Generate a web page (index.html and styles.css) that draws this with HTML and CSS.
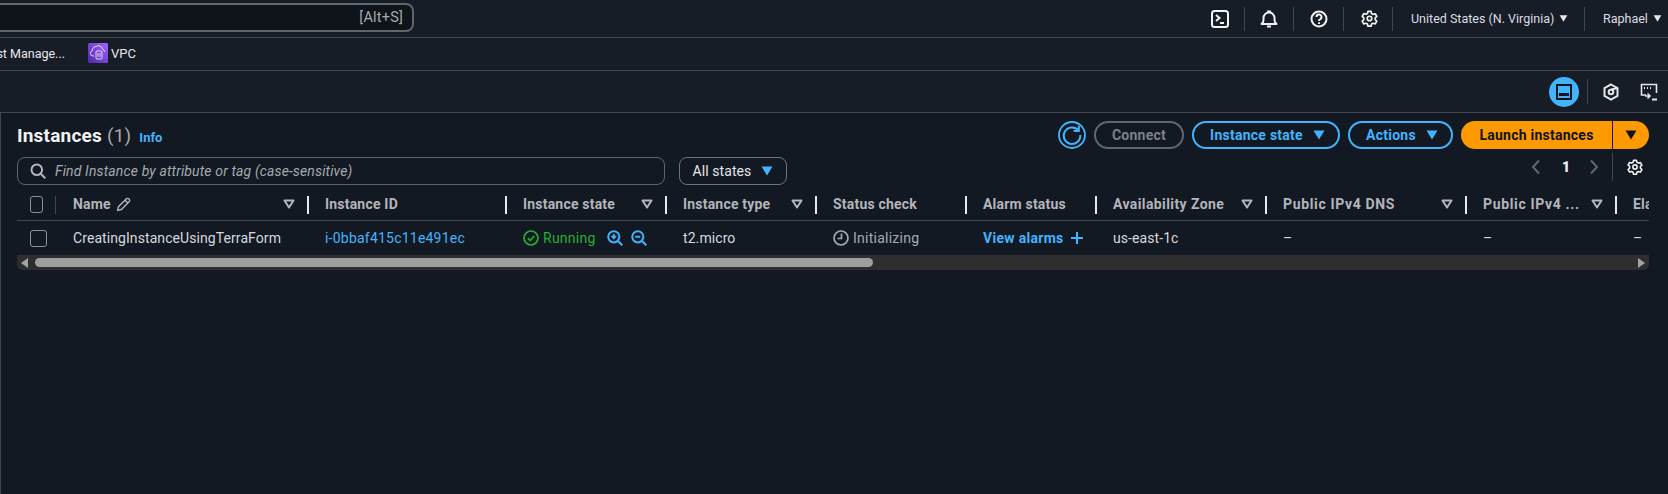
FILE: index.html
```html
<!DOCTYPE html>
<html lang="en">
<head>
<meta charset="utf-8">
<title>Instances</title>
<link rel="stylesheet" href="styles.css">
</head>
<body>
<svg class="defs" width="0" height="0" aria-hidden="true">
  <symbol id="gear" viewBox="0 0 24 24"><circle cx="12" cy="12" r="3.2" fill="none" stroke="currentColor" stroke-width="2.4"/><path fill="none" stroke="currentColor" stroke-width="2.4" stroke-linejoin="round" d="M9.8 2h4.4l.7 3 2.2 1.2 3-.9 2.2 3.8-2.2 2.1v2.5l2.2 2.1-2.2 3.8-3-.9-2.2 1.2-.7 3H9.8l-.7-3-2.2-1.2-3 .9-2.2-3.8 2.2-2.1V11L1.700 8.900l2.200-3.800 3 .9L9.100 5z"/></symbol>
  <symbol id="sort" viewBox="0 0 12 10"><path d="M1.500 1.500h9L6 8.500z" fill="none" stroke="currentColor" stroke-width="2" stroke-linejoin="round"/></symbol>
  <symbol id="caret" viewBox="0 0 12 10"><path d="M0.500 0.500h11L6 9.500z" fill="currentColor"/></symbol>
</svg>

<header class="topbar">
  <div class="global-search"><span class="shortcut">[Alt+S]</span></div>
  <div class="top-actions">
    <span class="top-icon"><svg width="18" height="18" viewBox="0 0 18 18" fill="none" stroke="currentColor" stroke-width="2"><rect x="1" y="1" width="16" height="16" rx="2.500"/><path d="M5 5l3.500 3L5 11M9 13h4"/></svg></span>
    <span class="top-icon"><svg width="18" height="18" viewBox="0 0 18 18" fill="none" stroke="currentColor" stroke-width="2" stroke-linejoin="round"><path d="M1.500 14h15c-1.500-1.200-2-2-2-4V8A5.500 5.500 0 0 0 3.500 8v2c0 2-.5 2.800-2 4z"/><path d="M7 1.500h4M7 16.500h4"/></svg></span>
    <span class="top-icon"><svg width="18" height="18" viewBox="0 0 18 18" fill="none" stroke="currentColor" stroke-width="2"><circle cx="9" cy="9" r="7.500"/><path d="M6.500 7a2.500 2.500 0 1 1 3.500 2.300c-.7.300-1 .8-1 1.700M9 12.200v1.800"/></svg></span>
    <span class="top-icon"><svg class="gear-top" width="17" height="17"><use href="#gear"/></svg></span>
    <span class="top-menu region">United States (N. Virginia)<svg class="menu-caret" width="9" height="7"><use href="#caret"/></svg></span>
    <span class="top-menu user">Raphael<svg class="menu-caret" width="9" height="7"><use href="#caret"/></svg></span>
  </div>
</header>

<nav class="favorites">
  <span class="fav-clipped">Trust Manage...</span>
  <span class="fav-vpc">
    <svg width="20" height="20" viewBox="0 0 20 20"><defs><linearGradient id="vpcg" x1="0" y1="1" x2="1" y2="0"><stop offset="0" stop-color="#4d27a8"/><stop offset="1" stop-color="#a166ff"/></linearGradient></defs><rect width="20" height="20" rx="1.500" fill="url(#vpcg)"/><path d="M6 13H5a2.700 2.700 0 0 1-.6-5.300A3.500 3.500 0 0 1 8 3.600a4 4 0 0 1 6.500 2.400 3 3 0 0 1 2 3" fill="none" stroke="#fff" stroke-width=".8"/><rect x="8" y="8" width="6" height="8" rx="1" fill="none" stroke="#fff" stroke-width=".8"/><path d="M10 10v4M12 10v4" stroke="#fff" stroke-width=".8"/></svg>
    VPC
  </span>
</nav>

<div class="toolbar">
  <span class="panel-toggle"><svg width="16" height="16" viewBox="0 0 16 16" fill="none" stroke="#10151c" stroke-width="2"><rect x="1" y="1" width="14" height="14"/><path d="M3 10.500h10" stroke-width="3"/></svg></span>
  <span class="tool-icon first"><svg width="16" height="18" viewBox="0 0 16 18" fill="none" stroke="currentColor" stroke-width="2"><path d="M8 1.500l6.500 3.700v7.600L8 16.500l-6.500-3.700V5.200z"/><circle cx="8" cy="9" r="2.300"/><path d="M8 6.500l6-1.300"/></svg></span>
  <span class="tool-icon last"><svg width="18" height="18" viewBox="0 0 18 18" fill="none" stroke="currentColor" stroke-width="1.600"><path d="M6 12H1.500V1.500h15V10"/><path d="M4 5h1M7 5h1M10 5h1" stroke-width="2"/><path d="M5 10h5M7.500 7.500L10 10l-2.500 2.500" transform="translate(0 3)"/><path d="M12 16.500h5" stroke-width="2"/></svg></span>
</div>

<main class="panel">
  <div class="panel-head">
    <h1 class="title">Instances <span class="count">(1)</span> <a class="info">Info</a></h1>
    <div class="actions">
      <span class="refresh"><svg width="28" height="28" viewBox="0 0 28 28" fill="none" stroke="currentColor"><circle cx="14" cy="14" r="13" stroke-width="1.800"/><path d="M20.500 9.500A8.300 8.300 0 1 0 22.300 14" stroke-width="2"/><path d="M20.800 4.800v5.200h-5.200" stroke-width="2"/></svg></span>
      <span class="btn disabled">Connect</span>
      <span class="btn outline state-btn">Instance state<svg width="12" height="10"><use href="#caret"/></svg></span>
      <span class="btn outline actions-btn">Actions<svg width="12" height="10"><use href="#caret"/></svg></span>
      <span class="launch"><span class="launch-main">Launch instances</span><span class="launch-more"><svg width="12" height="10"><use href="#caret"/></svg></span></span>
    </div>
  </div>

  <div class="filter-row">
    <div class="find">
      <svg width="16" height="16" viewBox="0 0 16 16" fill="none" stroke="currentColor" stroke-width="2"><circle cx="6.800" cy="6.800" r="5.300"/><path d="M10.800 10.800l4.500 4.500"/></svg>
      <em>Find Instance by attribute or tag (case-sensitive)</em>
    </div>
    <span class="all-states">All states<svg width="12" height="10"><use href="#caret"/></svg></span>
    <div class="pager">
      <svg class="pg-arrow" width="10" height="16" viewBox="0 0 10 16" fill="none" stroke="currentColor" stroke-width="2"><path d="M8 1.500L2 8l6 6.500"/></svg>
      <b>1</b>
      <svg class="pg-arrow" width="10" height="16" viewBox="0 0 10 16" fill="none" stroke="currentColor" stroke-width="2"><path d="M2 1.500L8 8l-6 6.500"/></svg>
      <span class="pg-gear"><svg width="16" height="16"><use href="#gear"/></svg></span>
    </div>
  </div>

  <div class="table">
    <div class="grid head">
      <div class="cell check-cell"><i class="check"></i></div>
      <div class="cell"><span class="name-label">Name<svg width="15" height="15" viewBox="0 0 14 14" fill="none" stroke="currentColor" stroke-width="1.300"><path d="M1.500 12.500l.8-3.500L9.500 1.800a1.600 1.600 0 0 1 2.700 2.700L5 11.700z"/><path d="M8.500 3l2.500 2.500"/></svg></span><svg class="sort" width="12" height="10"><use href="#sort"/></svg></div>
      <div class="cell">Instance ID</div>
      <div class="cell">Instance state<svg class="sort" width="12" height="10"><use href="#sort"/></svg></div>
      <div class="cell">Instance type<svg class="sort" width="12" height="10"><use href="#sort"/></svg></div>
      <div class="cell">Status check</div>
      <div class="cell">Alarm status</div>
      <div class="cell wide">Availability Zone<svg class="sort" width="12" height="10"><use href="#sort"/></svg></div>
      <div class="cell wider">Public IPv4 DNS<svg class="sort" width="12" height="10"><use href="#sort"/></svg></div>
      <div class="cell wider">Public IPv4 ...<svg class="sort" width="12" height="10"><use href="#sort"/></svg></div>
      <div class="cell last">Elastic IP</div>
    </div>
    <div class="grid row">
      <div class="cell check-cell"><i class="check"></i></div>
      <div class="cell">CreatingInstanceUsingTerraForm</div>
      <div class="cell"><a class="link">i-0bbaf415c11e491ec</a></div>
      <div class="cell">
        <span class="running"><svg width="16" height="16" viewBox="0 0 16 16" fill="none" stroke="currentColor" stroke-width="1.700"><circle cx="8" cy="8" r="7"/><path d="M4.800 8.200l2.300 2.300 4.200-4.500"/></svg>Running</span>
        <svg class="zoom first-zoom" width="16" height="16" viewBox="0 0 16 16" fill="none" stroke="currentColor" stroke-width="2"><circle cx="6.800" cy="6.800" r="5.600"/><path d="M11 11l4.300 4.300M4.300 6.800h5M6.800 4.300v5"/></svg>
        <svg class="zoom" width="16" height="16" viewBox="0 0 16 16" fill="none" stroke="currentColor" stroke-width="2"><circle cx="6.800" cy="6.800" r="5.600"/><path d="M11 11l4.300 4.300M4.300 6.800h5"/></svg>
      </div>
      <div class="cell">t2.micro</div>
      <div class="cell"><span class="init"><svg width="16" height="16" viewBox="0 0 16 16" fill="none" stroke="currentColor" stroke-width="1.700"><circle cx="8" cy="8" r="7"/><path d="M8.500 3.500V8.500H4.500"/></svg>Initializing</span></div>
      <div class="cell"><a class="alarms">View alarms</a><svg class="plus" width="14" height="14" viewBox="0 0 14 14" stroke="currentColor" stroke-width="2"><path d="M7 1v12M1 7h12"/></svg></div>
      <div class="cell">us-east-1c</div>
      <div class="cell">–</div>
      <div class="cell">–</div>
      <div class="cell last">–</div>
    </div>
    <div class="hscroll">
      <i class="arrow-l"></i>
      <span class="thumb"></span>
      <i class="arrow-r"></i>
    </div>
  </div>
</main>
</body>
</html>
```
FILE: styles.css
```css
* { box-sizing: border-box; }
html, body { margin: 0; height: 100%; }
body {
  width: 1668px;
  height: 494px;
  overflow: hidden;
  background: #161d26;
  color: #e3e3e8;
  font-family: Roboto, "Liberation Sans", sans-serif;
  font-size: 14px;
  letter-spacing: .08px;
}
svg { display: block; flex: none; }
.defs { position: absolute; }

.topbar {
  height: 38px;
  display: flex;
  justify-content: space-between;
  border-bottom: 1px solid #424650;
}
.global-search {
  width: 414px;
  height: 29px;
  margin-top: 3px;
  background: #0f141a;
  border: 2px solid #5f6670;
  border-left: 0;
  border-radius: 0 8px 8px 0;
  display: flex;
  align-items: center;
  justify-content: flex-end;
  padding: 0 9px 1px 0;
  color: #a6a9b0;
  font-size: 14.500px;
  letter-spacing: .2px;
}
.top-actions { display: flex; align-items: center; color: #f2f2f5; }
.top-icon {
  width: 49.33px;
  height: 24px;
  display: flex;
  align-items: center;
  justify-content: center;
  border-right: 1px solid #424650;
}
.gear-top { margin-left: 3px; }
.top-menu {
  height: 24px;
  display: flex;
  align-items: center;
  font-size: 12.500px;
  letter-spacing: 0;
  color: #dcdce2;
  white-space: nowrap;
}
.region { width: 192px; padding-left: 18px; border-right: 1px solid #424650; }
.user { width: 83px; padding-left: 18px; }
.menu-caret { margin-left: 5px; color: #e6e6ea; }

.favorites {
  height: 33px;
  display: flex;
  align-items: center;
  padding-bottom: 2px;
  border-bottom: 1px solid #424650;
  color: #e8e8ec;
  font-size: 13px;
}
.fav-clipped {
  width: 65px;
  display: flex;
  justify-content: flex-end;
  overflow: hidden;
  white-space: nowrap;
  margin-right: 23px;
  font-size: 12.500px;
  letter-spacing: 0;
}
.fav-vpc { display: flex; align-items: center; gap: 3px; letter-spacing: 0; }

.toolbar {
  height: 42px;
  display: flex;
  align-items: center;
  justify-content: flex-end;
  border-bottom: 1px solid #424650;
  color: #e6e6ea;
}
.panel-toggle {
  width: 30px;
  height: 30px;
  border-radius: 50%;
  background: #42b4ff;
  display: flex;
  align-items: center;
  justify-content: center;
  margin-right: 8px;
}
.tool-icon { display: flex; align-items: center; justify-content: center; height: 25px; }
.tool-icon.first { width: 47px; border-left: 1px solid #424650; }
.tool-icon.last { width: 34px; padding-right: 5px; }

.panel {
  height: 381px;
  background: #121922;
  border-left: 1px solid #424650;
  padding: 8px 19px 0 16px;
}
.panel-head { display: flex; justify-content: space-between; align-items: center; height: 28px; }
.title { margin: 0; font-size: 19px; font-weight: 700; letter-spacing: .2px; color: #f2f2f5; display: flex; align-items: baseline; gap: 5px; }
.count { font-weight: 400; color: #a6a9b0; }
.info { font-size: 13px; font-weight: 700; color: #42b4ff; margin-left: 3px; letter-spacing: 0; }
.actions { display: flex; align-items: center; gap: 8px; font-weight: 700; letter-spacing: .25px; }
.refresh { color: #42b4ff; }
.btn {
  height: 28px;
  border-radius: 14px;
  border: 2px solid;
  display: flex;
  align-items: center;
  justify-content: center;
  gap: 10px;
}
.disabled { width: 90px; color: #7d8189; border-color: #5f6670; }
.outline { color: #42b4ff; border-color: #42b4ff; padding-left: 3px; }
.state-btn { width: 148px; }
.actions-btn { width: 105px; }
.launch { display: flex; height: 28px; color: #0f141a; gap: 1px; }
.launch-main {
  width: 151px;
  background: #ff9900;
  border-radius: 14px 0 0 14px;
  display: flex;
  align-items: center;
  justify-content: center;
}
.launch-more {
  width: 36px;
  background: #ff9900;
  border-radius: 0 14px 14px 0;
  display: flex;
  align-items: center;
  justify-content: center;
}

.filter-row { display: flex; align-items: flex-start; margin-top: 4px; height: 37px; }
.find {
  width: 648px;
  height: 28px;
  margin-top: 4px;
  border: 1px solid #5f6670;
  border-radius: 8px;
  display: flex;
  align-items: center;
  gap: 9px;
  padding-left: 12px;
  color: #b4b4bb;
}
.find em { font-size: 14px; color: #a6a9b0; letter-spacing: .14px; }
.all-states {
  width: 108px;
  height: 28px;
  margin: 4px 0 0 14px;
  border: 1px solid #6f737b;
  border-radius: 8px;
  display: flex;
  align-items: center;
  justify-content: center;
  gap: 10px;
  color: #e3e3e8;
}
.all-states svg { color: #42b4ff; }
.pager { margin-left: auto; height: 28px; display: flex; align-items: center; color: #f2f2f5; font-weight: 700; }
.pg-arrow { color: #5f6670; }
.pager b { width: 50px; text-align: center; margin-right: -2px; }
.pg-gear { height: 28px; margin-left: 13px; padding: 0 6px 0 14px; border-left: 1px solid #424650; display: flex; align-items: center; }

.table { width: 1632px; overflow: hidden; }
.grid {
  display: grid;
  grid-template-columns: 40px 252px 198px 160px 150px 150px 130px 170px 200px 150px 32px;
}
.cell {
  position: relative;
  display: flex;
  align-items: center;
  padding-left: 16px;
  white-space: nowrap;
  overflow: hidden;
}
.head { height: 31px; border-bottom: 1px solid #424650; font-weight: 700; letter-spacing: .2px; color: #b4b4bb; }
.head .cell { height: 30px; padding-bottom: 2px; padding-right: 14px; }
.head .cell::after {
  content: "";
  position: absolute;
  right: 0;
  top: 6px;
  width: 2px;
  height: 18px;
  background: #e8e8ec;
}
.head .wide { letter-spacing: .4px; }
.head .wider { letter-spacing: .65px; }
.head .check-cell::after { width: 1px; background: #424650; right: 1px; }
.head .last::after { display: none; }
.head .last { padding-right: 0; }
.sort { margin-left: auto; color: #b4b4bb; }
.name-label { display: flex; align-items: center; gap: 5px; }
.head .check-cell, .check-cell { padding-left: 13px; }
.check { width: 17px; height: 17px; border: 1.500px solid #8d9096; border-radius: 3px; display: block; }
.row { height: 34px; color: #d8d8de; }
.link { color: #42b4ff; letter-spacing: .22px; }
.running { display: flex; align-items: center; gap: 4px; color: #29ad32; letter-spacing: .25px; }
.zoom { color: #42b4ff; margin-left: 8px; }
.first-zoom { margin-left: 11px; }
.init { display: flex; align-items: center; gap: 4px; color: #a6a9b0; letter-spacing: .25px; }
.alarms { color: #42b4ff; font-weight: 700; letter-spacing: .3px; }
.plus { color: #42b4ff; margin-left: 6px; }
.hscroll {
  height: 15px;
  background: #2e2e2e;
  border-radius: 0 0 6px 6px;
  display: flex;
  align-items: center;
  padding: 0 4px;
}
.arrow-l { border: 5px solid transparent; border-right: 7px solid #a3a3a3; border-left: 0; margin-right: 7px; }
.thumb { width: 838px; height: 9px; border-radius: 5px; background: #9e9e9e; }
.arrow-r { border: 5px solid transparent; border-left: 7px solid #a3a3a3; border-right: 0; margin-left: auto; }
```
